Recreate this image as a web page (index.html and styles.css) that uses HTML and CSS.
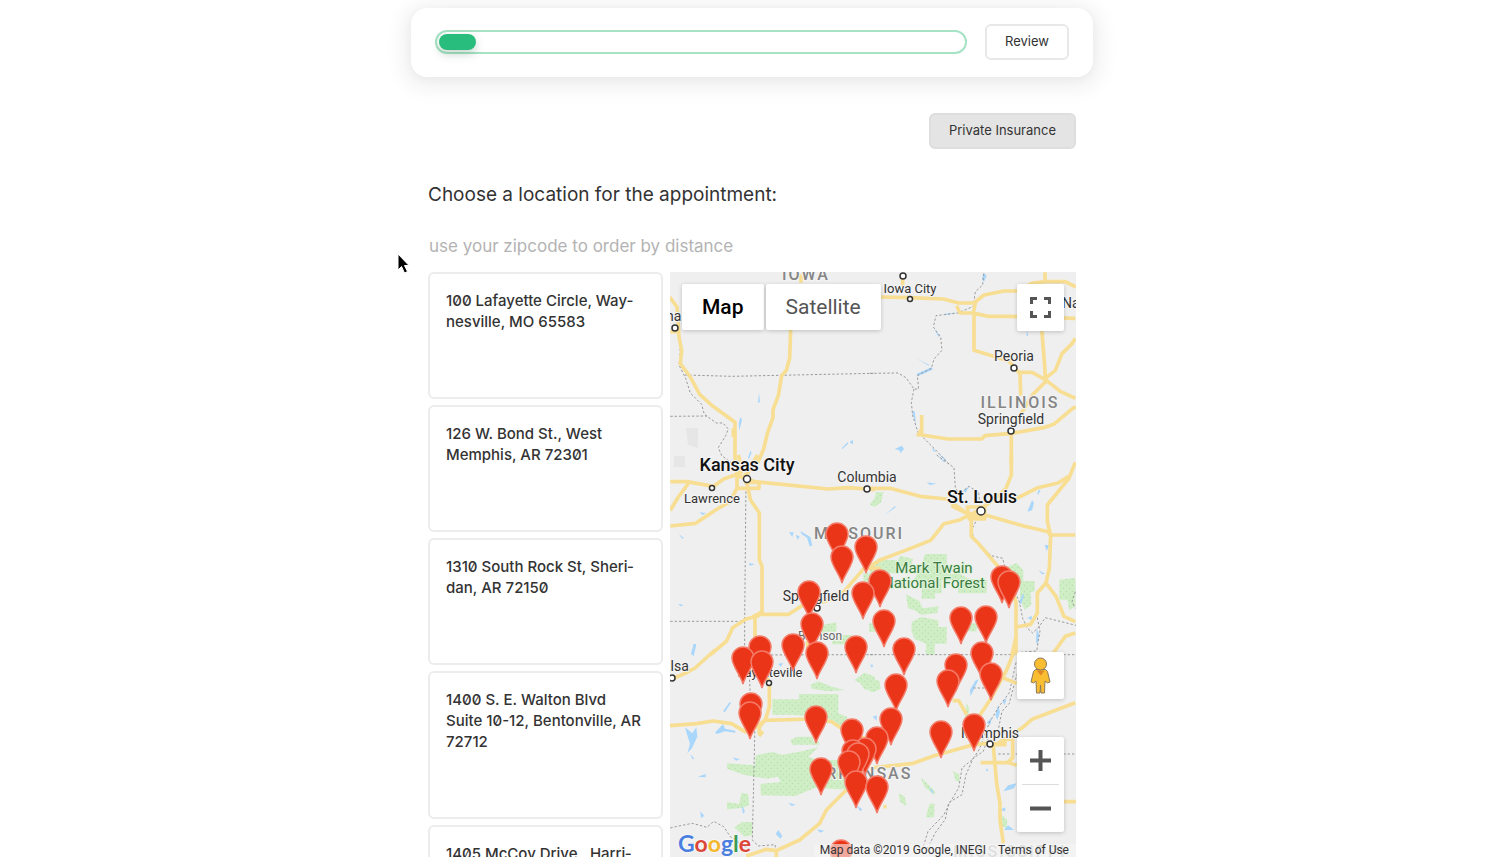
FILE: index.html
```html
<!DOCTYPE html>
<html lang="en">
<head>
<meta charset="utf-8">
<meta name="viewport" content="width=device-width, initial-scale=1">
<title>Choose a location</title>
<link rel="stylesheet" href="styles.css">
</head>
<body>
<div class="page">
  <header class="topbar">
    <div class="progress" role="progressbar" aria-label="Progress" aria-valuenow="7" aria-valuemin="0" aria-valuemax="100"><div class="progress-fill" style="width:7%"></div></div>
    <button class="btn btn-outline" type="button">Review</button>
  </header>

  <main class="content">
    <div class="answers"><button class="btn btn-filled" type="button">Private Insurance</button></div>
    <h1 class="question">Choose a location for the appointment:</h1>
    <input class="zipcode" type="text" aria-label="Zipcode" placeholder="use your zipcode to order by distance">

    <div class="picker">
      <ul class="locations">
        <li><button class="location" type="button">100 Lafayette Circle, Way&shy;nesville, MO 65583</button></li>
        <li><button class="location" type="button">126 W. Bond St., West Memphis, AR 72301</button></li>
        <li><button class="location" type="button">1310 South Rock St, Sheri&shy;dan, AR 72150</button></li>
        <li><button class="location" type="button">1400 S. E. Walton Blvd Suite 10-12, Bentonville, AR 72712</button></li>
        <li><button class="location" type="button">1405 McCoy Drive , Harri&shy;son, AR 72601</button></li>
      </ul>

      <section class="map" aria-label="Map of locations">
        <svg class="map-canvas" viewBox="670 272 406 585" preserveAspectRatio="xMinYMin slice">
          <defs>
            <path id="pin" d="M0 38C-2 30-11 20-11 12A11 11 0 0 1 11 12C11 20 2 30 0 38Z"/>
            <pattern id="trees" width="18" height="18" patternUnits="userSpaceOnUse"><rect width="18" height="18" fill="#d0eec6"/><circle cx="4" cy="4" r="2" fill="#b2dba9"/><circle cx="13" cy="13" r="2" fill="#b2dba9"/></pattern>
          </defs>
          <rect x="670" y="272" width="406" height="585" fill="#efefef"/>

          <!-- forests and parks -->
          <g class="forest" transform="translate(870 455) scale(.33333)">
            <path d="M18 112h22l-6 30-22 14-12-8 14-18zM0 335l30-20h50v40H30v40H0zM165 297h65v60h40l30 16h50v42H265v-40h-50v40h-20v16h-40v-34l-25-22 20-30zM108 418l40 20 10 22 48-6-4 20-48 6-20-14-20-6zM125 500l30-14 50 10v20h25v50h-36v34h-26v-34l-34-14-10-24zM300 505h20v24h-40zM410 336l30-12 20 22v32h34v32h-12l2 40-20 14-14-30v-50l-30-30zM568 374l48-6v86l-18 12-6-32h-24zM90 302l40 10-14 38-40-18z"/>
          </g>
          <g class="forest" transform="translate(665 455) scale(.33333)">
            <path d="M472 510l42-8v28h-30v16h-14zM500 540h60v24h44v20H540v-16h-38zM595 355h35v25h-35zM612 505h18v25h-18z"/>
          </g>
          <g class="forest" transform="translate(665 650) scale(.33333)">
            <path d="M322 148h80v-16h118v58l26 10v24h-38l-20-20-100-10h-66zM436 104l24-10 40 16 40 10-50 4-50-8zM568 90l30-22 32 12v44l-32-6-12-18zM376 270l20-10h48v14h18v10h-80zM186 340l84 6 2-30 50-10 30 8 58-10 50-12-30 28 30 10h70l40 20v70l-120-6-60 24-102-2-2-34 62-6-10-16-30 6-40-6-32-6-50-18zM186 456l36 6 8-34 20 4 2 34-20 8-46 4zM208 532l24-16h30v38l-24 6z"/>
          </g>
          <g class="forest" transform="translate(870 650) scale(.33333)">
            <path d="M0 86l28 6 4 24-20 10H0zM165 0h20v12h-15zM152 382l42 40v14l-30-24zM86 430l18 10 6 28-20-12zM180 460l14 2-2 40h-24l6-26zM248 362l20 12v22l-12-6zM390 490l22 20-2 26-14-8zM290 160l8 16-4 30-10-2z"/>
          </g>
          <g fill="#e6e6e6"><path d="M686 428h12v20l-10-3zM674 456h11v11h-11z"/></g>

          <!-- lakes and rivers -->
          <g class="water" transform="translate(665 265) scale(.33333)"><path d="M282 382l3 28-6 4zM226 456l5 8-8 32-2-20zM256 558l4 4-8 20-3-4zM530 550l18-18 2 4-18 16zM556 528l8-2v12l-8-4z"/></g>
          <g class="water" transform="translate(870 265) scale(.33333)"><path d="M340 24l10 8-8 18-6-8zM225 146l38-4-36 8zM192 192l18 20-4 4zM140 326l46-20 2 8-46 20zM138 280l40 20-2 2zM126 440l8-2 4 40zM74 552l22-10 6 10-10 12-4-8zM470 194l5 20-5-2zM186 545l12 16-8-2zM204 565l24 18-4 2z"/></g>
          <g class="water" transform="translate(665 455) scale(.33333)"><path d="M42 238l14 10-4 4zM104 172l20 2-12 6zM372 232h14l-4 14zM392 240l12 4-6 10zM406 228l30 18 6 26-8 2-8-26-16-10zM252 324l18 4-16 4zM40 446l16 4-10 4zM86 566l8 2-8 36-8-8z"/></g>
          <g class="water" transform="translate(870 455) scale(.33333)"><path d="M170 82l30 4-20 4zM44 180l30-26 4 2zM506 104l6 2-8 14-2-4zM486 136l6 8-6 22-14 4zM280 106l18-12-12 20zM524 270h14l-8 18zM506 346l20 10-10 2zM446 444l14-30 2 8-8 24zM500 520l8 20-6 30-4-10zM472 490l12-8 4 14zM200 0l26 20-4 2z"/></g>
          <g class="water" transform="translate(665 650) scale(.33333)"><path d="M174 184l20-28 4 2-18 28zM60 232l22 18 12-18 3 28-16 34-14 16 8-28-8-26zM150 248l24-26 6 14 30 6 2 6-32-4-24 8zM76 312l12 14-6 2zM202 322l22 6-10 4zM98 380l24-8v10zM106 484l12 14-10 6zM340 540l12 18-6 8-14-14zM370 458l22 6-12 4zM230 466l10 18-6 8zM456 538l22 4-12 6zM340 42l14-4-6 12zM574 466l18 12-6 6z"/></g>
          <g class="water" transform="translate(870 650) scale(.33333)"><path d="M400 424l14-18 26-6-10 16zM390 480l16-8v12zM402 540l12-14 18 14zM8 200l12-4v16zM0 44h10l-4 10zM300 120l16-28 10-4-24 50zM376 196l8-30 6 20-8 24zM350 218l16-16-6 24zM398 154l12-10-6 22zM176 410l14 14-2 8zM350 354l6 10-8-2z"/></g>

          <!-- state borders -->
          <g class="border" transform="translate(665 265) scale(.33333)"><path d="M40 200l6 60-4 40 20 40 14 44 34 34 8 30 36 26h20l16 18-8 20-22 36 10 24 30 22M60 330l140 4 425-9M16 454l110-1"/></g>
          <g class="border" transform="translate(870 265) scale(.33333)"><path d="M0 325l84-1 24 14 24 34h14l-4-40 42-22 8-28 24-26-4-40-22-30 8-34 66-8 46-20 6-44 22-20 4-38M132 372l-8 40 4 40 16 50 50 50 46 48"/></g>
          <g class="border" transform="translate(665 455) scale(.33333)"><path d="M243 70l-4 430v100M16 499h224"/></g>
          <g class="border" transform="translate(870 455) scale(.33333)"><path d="M200 0l52 38 4 60 12 20 28-24 30 18 6 60-26 50 4 30 54 50 34 8 10 40 40 90 10 50 14 30 16 14 20-20 18-26 120 30M502 488l8 40-10 60-60 5M616 410l-10 30 10 20"/></g>
          <g class="border" transform="translate(665 650) scale(.33333)"><path d="M240 15l390-1M238 0l14 50 4 90 14 80-8 350 18 18 50-4 4 37M16 534l16-4 50-10 44 12 20-18 30 16 20 30 60 40"/></g>
          <g class="border" transform="translate(870 650) scale(.33333)"><path d="M0 14h440M310 114h50M580 14h40M385 312h235M438 38l-20 90-30 40-30 50-30 80-20 30-32 26-10 60-24 40-20 40-48 50-16 52 20-4"/><path d="M442 70l-6 20-18 70-22 24-12 60-30 20-14 40-30 20-22 50-12 60-40 24-10 50-30 40-16 32"/></g>

          <!-- highways -->
          <g class="road" transform="translate(665 265) scale(.33333)"><path d="M14 96l22 30 6 90 8 40-4 40 30 40 28 52 40 36 66 48v108l12 50M408 28v25M377 190l-3 90-10 36-14 16-10 60-16 42v24l-16 44-12 50-20 46M205 490v26"/><path d="M16 200h25"/></g>
          <g class="road" transform="translate(870 265) scale(.33333)"><path d="M30 96l90 2 100 4 46 12h46l30-24 60-12h40l46-24 38-4h60l32 16M525 22v28M98 36v30M260 122l10 22h40l6-30M312 140v116l104 32 30 34h40l40 22 46 36 44 20M316 146l40 8h60l200 6M515 190l8 100 4 60-40 40-30 50-26 40M526 340l30-24 20-50 30-30 10-16M450 322l2 70M155 450v60l80 12h100l10-10 80-7 96-17 30-10 60-50h30M424 498v100M156 490l-14 24"/></g>
          <g class="road" transform="translate(665 455) scale(.33333)"><path d="M16 80h50l80 14 30-22 34-12 60 20 220 22 60-4 80 6M70 86l-30 40-24 40M16 213l76-8 60-40 44-26 20-40M244 74l12 60 27 40v140l8 20v136l-22 14h-4l12-6h94l40-26 40-6 40-10 46-26 60-70h50M283 482l-40 10-40 26-18 40-50 42M270 485v115M216 50v50h66v-18h-44M216 66l20-24M278 0l-16 26-14 30M220 0l14 50M230 70l22-20M426 540l4 60"/></g>
          <g class="road" transform="translate(870 455) scale(.33333)"><path d="M424 0v60l-16 40-32 30-50 36-60 30-44 10-40 50-70 28-80 30-32 20M0 100h60l90 24 80 8 70 50M244 152l60 30h50l110 32 70 16 6 10h76M424 138l80-40 60-14 36-22 16-40M600 66l-68 84v50l10 40-4 100-10 44-26 30v60l-20 34-44 8v84M528 384l30 40 24 60 34 16M304 180v64l20 20 60 70 40 50 14 60v100l-12 56M616 534l-30 10-36 50M292 156h52v36h-46z"/></g>
          <g class="road" transform="translate(665 650) scale(.33333)"><path d="M150 0l-60 54-30 16-46 20M14 227l80-6 50-8 56 8 40 24 20-4 40-30 140-4 60 8 60 40 60 14 20 16M305 80l8 20v70l-12 40-18 20v22M544 420l-60 60-20 40-60 50-70 32-30-4-60 20M334 602v20M294 244l-12 14"/></g>
          <g class="road" transform="translate(870 650) scale(.33333)"><path d="M434 0l-24 60-50 90-40 60M616 158l-130 50-30 26-76 48M400 84l40 16M248 152h18l24 42M0 354l40-4 90-10 60-22 120-34 40-4 20 10 10 110 10 60v50l10 70M378 284h26v-16h24v56l-16 14h-80M410 336l30 10M580 455h40M40 470h10M350 280l60 4"/></g>

          <!-- city markers -->
          <g class="dot"><circle cx="903" cy="276" r="3"/><circle cx="910" cy="299" r="2.500"/><circle cx="675" cy="328" r="3"/><circle cx="1014" cy="368" r="3"/><circle cx="1011" cy="431" r="3"/><circle cx="747" cy="479" r="3.500"/><circle cx="712" cy="488" r="2.500"/><circle cx="867" cy="489" r="3"/><circle cx="981" cy="511" r="4"/><circle cx="817" cy="608" r="3"/><circle cx="769" cy="683" r="2.500"/><circle cx="672" cy="678" r="3"/><circle cx="990" cy="744" r="3"/></g>

          <!-- place names -->
          <g class="label">
            <text class="state" x="806" y="280">IOWA</text>
            <text class="state" x="1020" y="408">ILLINOIS</text>
            <text class="state" x="859" y="539">MISSOURI</text>
            <text class="state" x="863" y="779">ARKANSAS</text>
            <text class="state faint" x="1010" y="857">MISSISSIPPI</text>
            <text class="town mid" x="910" y="293">Iowa City</text>
            <text class="town" x="1014" y="361">Peoria</text>
            <text class="town" x="1011" y="424">Springfield</text>
            <text class="town" x="867" y="482">Columbia</text>
            <text class="town" x="816" y="601">Springfield</text>
            <text class="town mid" x="712" y="503">Lawrence</text>
            <text class="town small" x="820" y="640">Branson</text>
            <text class="town mid" x="770" y="677">Fayetteville</text>
            <text class="town" x="990" y="738">Memphis</text>
            <text class="town" x="659" y="321">Omaha</text>
            <text class="town" x="672" y="671">Tulsa</text>
            <text class="town" x="1093" y="308">Naperville</text>
            <text class="city" x="747" y="471">Kansas City</text>
            <text class="city" x="982" y="503">St. Louis</text>
            <text class="park" x="934" y="573">Mark Twain</text>
            <text class="park" x="934" y="588">National Forest</text>
          </g>

          <!-- clinic pins, north to south -->
          <g class="pins">
            <use href="#pin" x="837" y="522"/><use href="#pin" x="866" y="535"/><use href="#pin" x="842" y="545"/><use href="#pin" x="1002" y="565"/><use href="#pin" x="880" y="569"/><use href="#pin" x="1009" y="570"/><use href="#pin" x="809" y="580"/><use href="#pin" x="863" y="581"/><use href="#pin" x="986" y="605"/><use href="#pin" x="961" y="606"/><use href="#pin" x="884" y="609"/><use href="#pin" x="812" y="612"/><use href="#pin" x="793" y="633"/><use href="#pin" x="760" y="635"/><use href="#pin" x="856" y="635"/><use href="#pin" x="904" y="637"/><use href="#pin" x="982" y="641"/><use href="#pin" x="817" y="641"/><use href="#pin" x="743" y="646"/><use href="#pin" x="762" y="650"/><use href="#pin" x="956" y="653"/><use href="#pin" x="991" y="662"/><use href="#pin" x="948" y="669"/><use href="#pin" x="896" y="673"/><use href="#pin" x="751" y="692"/><use href="#pin" x="750" y="701"/><use href="#pin" x="816" y="705"/><use href="#pin" x="891" y="707"/><use href="#pin" x="974" y="713"/><use href="#pin" x="852" y="718"/><use href="#pin" x="941" y="720"/><use href="#pin" x="877" y="726"/><use href="#pin" x="865" y="737"/><use href="#pin" x="853" y="739"/><use href="#pin" x="858" y="742"/><use href="#pin" x="849" y="750"/><use href="#pin" x="821" y="757"/><use href="#pin" x="856" y="770"/><use href="#pin" x="877" y="775"/><use href="#pin" x="841" y="839"/>
          </g>
        </svg>

        <div class="map-types">
          <button class="map-type is-active" type="button">Map</button>
          <button class="map-type" type="button">Satellite</button>
        </div>
        <button class="map-control fullscreen" type="button" aria-label="Toggle fullscreen">
          <svg width="23" height="23" viewBox="0 0 23 23" fill="none" stroke="#555" stroke-width="3"><path d="M2.500 8V2.500H8M15 2.500h5.500V8M20.500 15v5.500H15M8 20.500H2.500V15"/></svg>
        </button>
        <button class="map-control street" type="button" aria-label="Street View">
          <svg width="21" height="37" viewBox="0 0 21 37"><path d="M5.500 12.500h10l2 2L20 25l-2.500 1-2.500-2-.5 12h-3.500l-.5-8-.5 8H6.500L6 24l-2.500 2L1 25l2.500-10.500z" fill="#f8bd30" stroke="#8a7a5c"/><path d="M6.500 13.500h8L11 18.500z" fill="#df8727"/><circle cx="10.500" cy="7" r="6" fill="#f8bd30" stroke="#8a7a5c"/></svg>
        </button>
        <div class="zoom">
          <button class="zoom-btn" type="button" aria-label="Zoom in"><svg width="21" height="21" viewBox="0 0 21 21"><path d="M8.500 0h4v8.500H21v4h-8.500V21h-4v-8.500H0v-4h8.500z" fill="#555"/></svg></button>
          <button class="zoom-btn" type="button" aria-label="Zoom out"><svg width="21" height="21" viewBox="0 0 21 21"><path d="M0 8.500h21v4H0z" fill="#555"/></svg></button>
        </div>
        <div class="attribution">
          <a class="google" href="#" aria-label="Google"><span class="blue">G</span><span class="red">o</span><span class="yellow">o</span><span class="blue">g</span><span class="green">l</span><span class="red">e</span></a>
          <div class="legal"><span>Map data ©2019 Google, INEGI</span><a href="#">Terms of Use</a></div>
        </div>
      </section>
    </div>
  </main>
</div>
<svg class="cursor" width="14" height="22" viewBox="0 0 14 22" aria-hidden="true"><path d="M1 1v16l3.500-3.500L7.500 20l3-1.500-3-6H12z" fill="#000" stroke="#fff"/></svg>
</body>
</html>
```
FILE: styles.css
```css
* { box-sizing: border-box; }

body {
  margin: 0;
  padding-left: 4px;
  background: #fff;
  color: #333;
  font-family: Inter, "Liberation Sans", sans-serif;
  font-size: 15px;
}

button, input { font: inherit; color: inherit; }
button { cursor: pointer; }

.page {
  display: flex;
  flex-direction: column;
  height: 100vh;
  min-height: 560px;
  max-width: 682px;
  margin: 0 auto;
  padding-top: 8px;
}

.topbar {
  display: flex;
  align-items: center;
  gap: 18px;
  padding: 16px 24px 17px;
  border-radius: 16px;
  background: #fff;
  box-shadow: 0 4px 20px 8px rgba(0, 0, 0, .06), 0 2px 10px rgba(0, 0, 0, .04);
}

.progress {
  flex: 1;
  height: 24px;
  padding: 2px;
  border: 2px solid #a6e3c5;
  border-radius: 12px;
}

.progress-fill {
  height: 16px;
  border-radius: 8px;
  background: #28bd7c;
  box-shadow: 0 4px 10px rgba(40, 90, 60, .25);
}

.btn {
  height: 36px;
  padding: 0 18px 2px;
  border: 2px solid #e8e8e8;
  border-radius: 6px;
  background: #fff;
  font-size: 13px;
}

.btn-filled {
  border-color: #dedede;
  background: #e4e4e4;
}

.content {
  display: flex;
  flex: 1;
  flex-direction: column;
  min-height: 0;
  padding: 36px 17px 0;
}

.answers { display: flex; justify-content: flex-end; }

.question {
  margin: 32px 0 0;
  font-size: 19px;
  font-weight: 400;
  line-height: 28px;
}

.zipcode {
  height: 36px;
  margin: 19px 0 8px;
  padding: 0 1px;
  border: 0;
  outline: 0;
  background: transparent;
  font-size: 17px;
}

.zipcode::placeholder { color: #b3b3b3; opacity: 1; }

.picker {
  display: grid;
  flex: 1;
  grid-template-columns: 235px minmax(0, 1fr);
  gap: 7px;
  min-height: 0;
}

.locations {
  display: flex;
  flex-direction: column;
  gap: 6px;
  min-height: 0;
  margin: 0;
  padding: 0;
  overflow-y: auto;
  scrollbar-width: none;
  list-style: none;
}

.location {
  display: block;
  width: 100%;
  padding: 16px 16px 65px;
  border: 2px solid #ececec;
  border-radius: 6px;
  background: #fff;
  font-size: 15px;
  font-weight: 500;
  font-feature-settings: "zero";
  line-height: 21px;
  text-align: left;
}

.map {
  position: relative;
  min-height: 0;
  overflow: hidden;
  background: #efefef;
  font-family: Roboto, "Liberation Sans", sans-serif;
}

.map-canvas { display: block; width: 100%; height: 100%; }

.forest { fill: url(#trees); }
.water { fill: #a9d6fb; }
.border { fill: none; stroke: #999; stroke-width: 3; stroke-dasharray: 7 6; }
.road { fill: none; stroke: #f7de93; stroke-width: 11; stroke-linejoin: round; }
.dot { fill: #fff; stroke: #333; stroke-width: 1.5; }
.pins { fill: #ea3519; stroke: #f47b68; stroke-width: 1.5; }

.label { text-anchor: middle; fill: #333; stroke: #f4f4f4; stroke-width: 2; paint-order: stroke; }
.town { font-size: 14px; }
.mid { font-size: 13px; }
.small { font-size: 12px; fill: #666; }
.city { font-size: 18px; font-weight: 500; fill: #111; }
.state { font-size: 16px; font-weight: 500; letter-spacing: 2px; fill: #858585; }
.faint { fill: #bbb; }
.park { font-size: 15px; fill: #397b40; stroke: #e2f3dc; }

.map-types {
  position: absolute;
  top: 12px;
  left: 12px;
  display: flex;
  gap: 2px;
}

.map-type, .map-control {
  border: 0;
  border-radius: 2px;
  background: #fff;
  box-shadow: 0 1px 4px rgba(0, 0, 0, .2);
}

.map-type { height: 46px; padding: 0 20px; color: #555; font-size: 21px; }
.is-active { color: #000; font-weight: 500; }

.map-control, .zoom {
  position: absolute;
  right: 12px;
  width: 47px;
}

.map-control {
  display: grid;
  place-items: center;
  height: 47px;
  padding: 0;
}

.fullscreen { top: 12px; }
.street { bottom: 158px; }

.zoom {
  bottom: 25px;
  padding: 0 5px;
  border-radius: 2px;
  background: #fff;
  box-shadow: 0 1px 4px rgba(0, 0, 0, .2);
}

.zoom-btn {
  display: grid;
  place-items: center;
  width: 100%;
  height: 47px;
  padding: 0;
  border: 0;
  background: none;
}

.zoom-btn + .zoom-btn { height: 48px; border-top: 1px solid #ddd; }

.attribution {
  position: absolute;
  right: 0;
  bottom: 0;
  left: 0;
  display: flex;
  align-items: flex-end;
  justify-content: space-between;
  padding-left: 8px;
}

.google {
  font-family: Lato, sans-serif;
  font-size: 23px;
  font-weight: 700;
  line-height: 28px;
  text-decoration: none;
  text-shadow: 0 0 2px #fff, 0 0 2px #fff;
}

.blue { color: #4a7fe0; }
.red { color: #dc4638; }
.yellow { color: #f2b72c; }
.green { color: #3b9c56; }

.legal {
  display: flex;
  gap: 12px;
  padding: 0 7px 0 6px;
  background: rgba(245, 245, 245, .6);
  color: #333;
  font-size: 12px;
  line-height: 13px;
  white-space: nowrap;
}

.legal a { color: inherit; text-decoration: none; }

.cursor { position: absolute; top: 253px; left: 397px; }
```
